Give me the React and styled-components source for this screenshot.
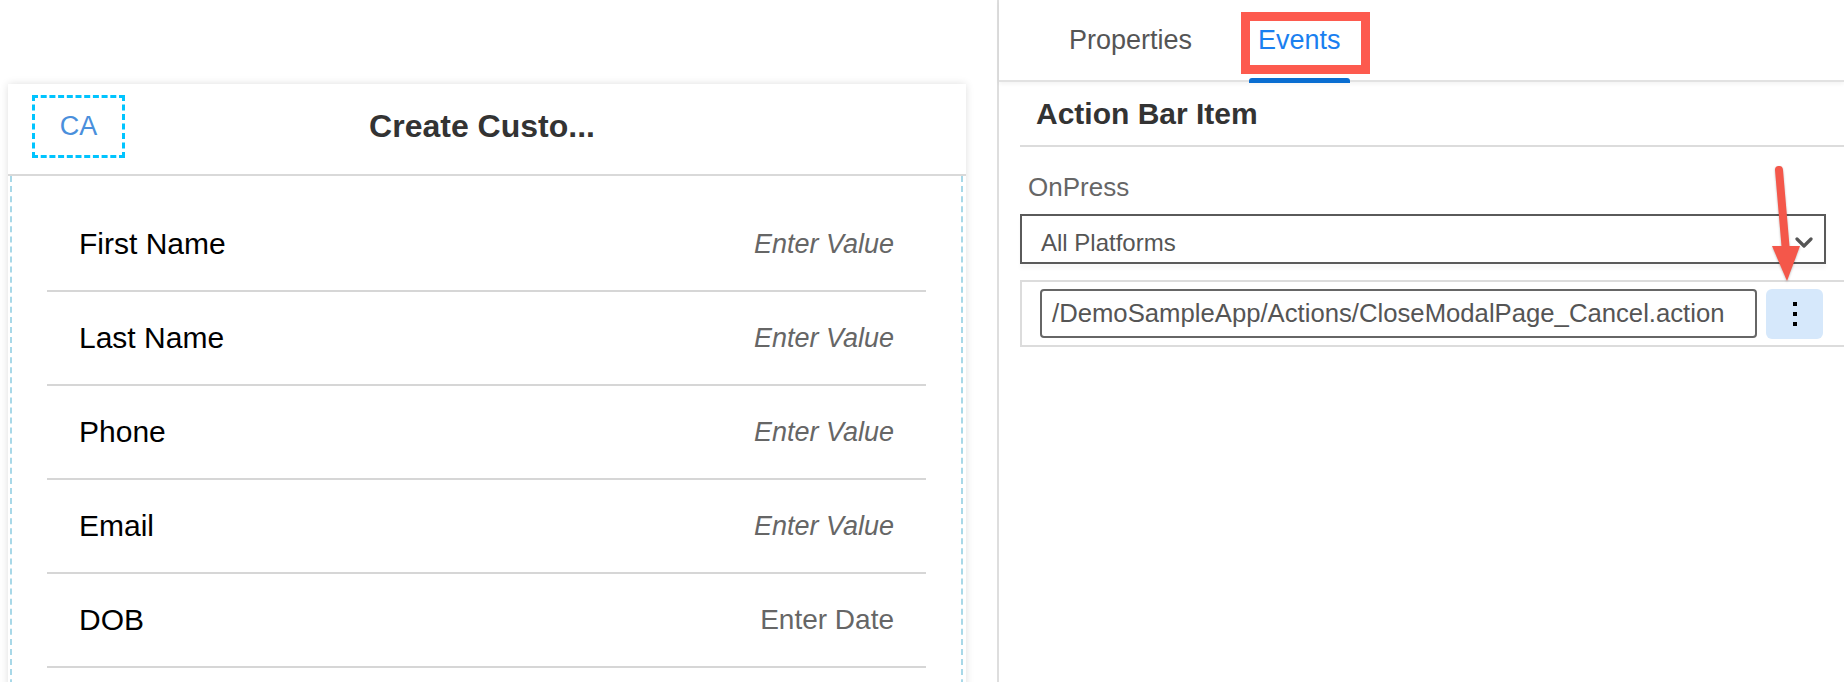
import styled, { createGlobalStyle } from "styled-components";

const GlobalStyle = createGlobalStyle`
  body {
    margin: 0;
    background: #ffffff;
    font-family: "Liberation Sans", Arial, Helvetica, sans-serif;
  }
`

const fields = [
  { label: "First Name", hint: "Enter Value", italic: true },
  { label: "Last Name", hint: "Enter Value", italic: true },
  { label: "Phone", hint: "Enter Value", italic: true },
  { label: "Email", hint: "Enter Value", italic: true },
  { label: "DOB", hint: "Enter Date", italic: false },
]

const App = () => {
  return (
    <>
      <GlobalStyle />
      <Page>
        <LeftPane>
          <Card>
            <CardHeader>
              <CaBox>CA</CaBox>
              <PageTitle>Create Custo...</PageTitle>
            </CardHeader>

            <FormArea>
              {fields.map((f) => (
                <FieldRow key={f.label}>
                  <FieldLabel>{f.label}</FieldLabel>
                  <FieldHint italic={f.italic}>{f.hint}</FieldHint>
                </FieldRow>
              ))}
            </FormArea>
          </Card>
        </LeftPane>

        <RightPane>
          <TabBar>
            <Tab>Properties</Tab>
            <Tab active>
              Events
              <Highlight />
            </Tab>
          </TabBar>

          <Section>
            <SectionTitle>Action Bar Item</SectionTitle>
            <PropLabel>OnPress</PropLabel>

            <Select>
              <span>All Platforms</span>
              <svg width="18" height="12" viewBox="0 0 18 12">
                <path d="M2 2 L9 9 L16 2" fill="none" stroke="#555" strokeWidth="3.2" strokeLinecap="round" strokeLinejoin="round" />
              </svg>
            </Select>

            <ActionRow>
              <PathInput>/DemoSampleApp/Actions/CloseModalPage_Cancel.action</PathInput>
              <MoreButton>
                <Dot />
                <Dot />
                <Dot />
              </MoreButton>
            </ActionRow>
          </Section>

          {/* annotation arrow pointing to the ... button */}
          <Arrow width="50" height="130" viewBox="0 0 50 130">
            <line x1="20" y1="10" x2="27" y2="92" stroke="#f4574a" strokeWidth="8" strokeLinecap="round" />
            <polygon points="13,86 41,86 28,121" fill="#f4574a" />
          </Arrow>
        </RightPane>
      </Page>
    </>
  )
}

const Page = styled.div`
  display: flex;
  width: 1844px;
  height: 682px;
  overflow: hidden;
  background: #ffffff;
  font-family: "Liberation Sans", Arial, Helvetica, sans-serif;
`

const LeftPane = styled.div`
  width: 999px;
  flex: none;
  box-sizing: border-box;
  border-right: 2px solid #dedede;
  padding: 84px 31px 0 8px;
`

const Card = styled.div`
  background: #ffffff;
  height: 640px;
  box-shadow: 0 0 8px rgba(0, 0, 0, 0.13);
`

const CardHeader = styled.div`
  height: 92px;
  box-sizing: border-box;
  display: grid;
  grid-template-columns: 1fr auto 1fr;
  align-items: center;
  padding: 0 34px 6px 24px;
  border-bottom: 2px solid #d9d9d9;
`

const CaBox = styled.div`
  justify-self: start;
  width: 93px;
  height: 63px;
  box-sizing: border-box;
  border: 3px dashed #00c4ff;
  display: flex;
  align-items: center;
  justify-content: center;
  font-size: 27px;
  color: #4a8fdc;
`

const PageTitle = styled.div`
  font-size: 32px;
  font-weight: 700;
  color: #333333;
`

const FormArea = styled.div`
  margin: 0 3px 0 2px;
  height: 100%;
  box-sizing: border-box;
  border-left: 2px dashed #a8d8e8;
  border-right: 2px dashed #a8d8e8;
  padding: 22px 35px 0;
`

const FieldRow = styled.div`
  height: 94px;
  box-sizing: border-box;
  display: flex;
  align-items: center;
  justify-content: space-between;
  padding: 0 32px;
  border-bottom: 2px solid #d6d6d6;
`

const FieldLabel = styled.div`
  font-size: 30px;
  color: #000000;
`

const FieldHint = styled.div`
  font-size: ${(p) => (p.italic ? "27px" : "28px")};
  font-style: ${(p) => (p.italic ? "italic" : "normal")};
  color: #666666;
`

const RightPane = styled.div`
  flex: 1;
  position: relative;
`

const TabBar = styled.div`
  height: 80px;
  display: flex;
  gap: 48px;
  padding-left: 61px;
  border-bottom: 2px solid #e2e2e2;
  box-shadow: 0 2px 4px rgba(0, 0, 0, 0.05);
`

const Tab = styled.div`
  position: relative;
  display: flex;
  align-items: center;
  padding: 0 9px;
  font-size: 27px;
  color: ${(p) => (p.active ? "#1a7ff0" : "#555555")};

  ${(p) =>
    p.active &&
    `
    &::after {
      content: "";
      position: absolute;
      left: 0;
      right: 0;
      bottom: -3px;
      height: 5px;
      border-radius: 3px 3px 0 0;
      background: #0a6ed1;
    }
  `}
`

const Highlight = styled.div`
  position: absolute;
  top: 12px;
  bottom: 6px;
  left: -8px;
  right: -20px;
  border: 9px solid #fd5a4e;
  pointer-events: none;
`

const Section = styled.div`
  padding-left: 21px;
`

const SectionTitle = styled.div`
  height: 63px;
  display: flex;
  align-items: center;
  padding-left: 16px;
  font-size: 30px;
  font-weight: 700;
  color: #333333;
  border-bottom: 2px solid #dcdcdc;
`

const PropLabel = styled.div`
  font-size: 26px;
  line-height: 30px;
  color: #666666;
  padding-left: 8px;
  margin: 25px 0 12px;
`

const Select = styled.div`
  height: 50px;
  margin-right: 18px;
  box-sizing: border-box;
  border: 2px solid #5a5a5a;
  display: flex;
  align-items: center;
  justify-content: space-between;
  padding: 8px 11px 0 19px;
  font-size: 24px;
  color: #555555;
  box-shadow: 0 5px 4px rgba(0, 0, 0, 0.03);
  margin-bottom: 16px;
`

const ActionRow = styled.div`
  height: 67px;
  box-sizing: border-box;
  border: 2px solid #dcdcdc;
  border-right: none;
  display: flex;
  align-items: center;
  gap: 9px;
  padding-left: 18px;
`

const PathInput = styled.div`
  width: 717px;
  height: 49px;
  box-sizing: border-box;
  border: 2px solid #666666;
  border-radius: 4px;
  display: flex;
  align-items: center;
  padding-left: 10px;
  font-size: 25.7px;
  color: #555555;
  white-space: nowrap;
`

const MoreButton = styled.div`
  width: 57px;
  height: 50px;
  border-radius: 6px;
  background: #d6e8fb;
  display: flex;
  flex-direction: column;
  align-items: center;
  justify-content: center;
  gap: 6px;
`

const Dot = styled.span`
  width: 4px;
  height: 4px;
  background: #000000;
`

const Arrow = styled.svg`
  position: absolute;
  left: 760px;
  top: 160px;
  filter: drop-shadow(0 1px 1px rgba(0, 0, 0, 0.25));
`

export default App;
